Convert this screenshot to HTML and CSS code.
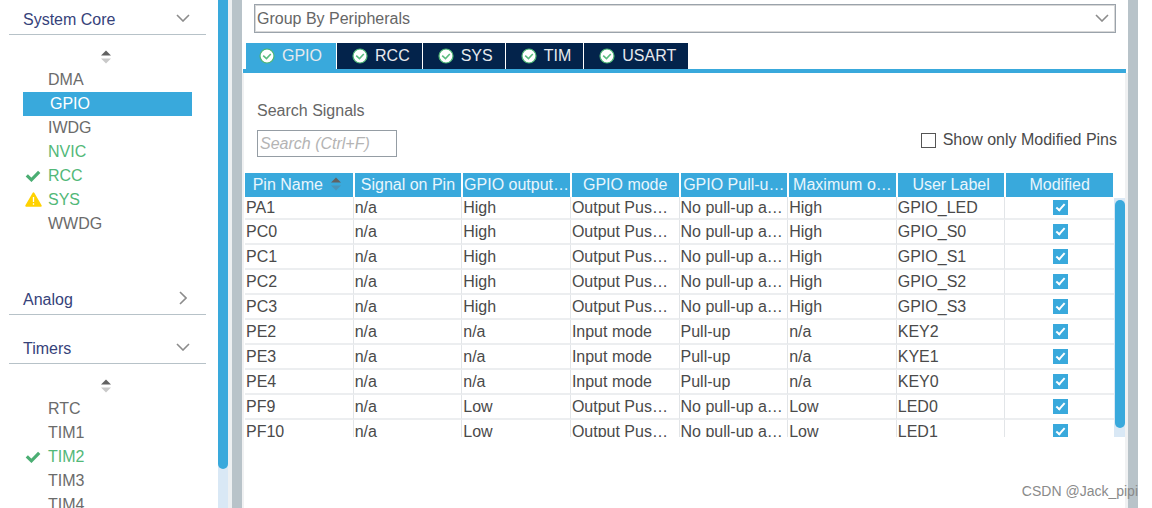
FILE: index.html
```html
<!DOCTYPE html>
<html lang="en">
<head>
<meta charset="utf-8">
<title>GPIO Mode and Configuration</title>
<link rel="stylesheet" href="styles.css">
</head>
<body>
<svg class="defs" width="0" height="0" aria-hidden="true">
  <symbol id="chev" viewBox="0 0 14 8"><path d="M1 1l6 6 6-6" fill="none" stroke="#8c8c8c" stroke-width="1.6"/></symbol>
  <symbol id="chev-right" viewBox="0 0 8 14"><path d="M1 1l6 6-6 6" fill="none" stroke="#8c8c8c" stroke-width="1.6"/></symbol>
  <symbol id="sort" viewBox="0 0 10 14"><path d="M5 0.5L10 5.5H0z" fill="#626262"/><path d="M0 8.5h10L5 13.5z" fill="#c9c9c9"/></symbol>
  <symbol id="check" viewBox="0 0 16 12"><path d="M1.8 5.4l4.6 4.4 7.8-8" fill="none" stroke="#4bae73" stroke-width="3.2"/></symbol>
  <symbol id="warn" viewBox="0 0 17 15"><path d="M8.5 1.2L15.8 13.8H1.2z" fill="#ffd200" stroke="#ffd200" stroke-width="1.8" stroke-linejoin="round"/><path d="M8.5 5v5M8.5 11.2v1.6" stroke="#fff" stroke-width="1.3"/></symbol>
  <symbol id="ok" viewBox="0 0 16 16"><circle cx="8" cy="8" r="7" fill="#fff" stroke="#4bb573" stroke-width="1.2"/><path d="M4.2 7.6l3.3 3 4.3-4.6" fill="none" stroke="#5bbd80" stroke-width="1.6"/></symbol>
</svg>
<div class="app">
  <nav class="sidebar">
    <section class="group group-open">
      <button class="group-head">System Core <svg class="chev"><use href="#chev"/></svg></button>
      <svg class="sort"><use href="#sort"/></svg>
      <ul class="items">
        <li><button class="item"><span class="mark"></span>DMA</button></li>
        <li><button class="item selected"><span class="mark"></span>GPIO</button></li>
        <li><button class="item"><span class="mark"></span>IWDG</button></li>
        <li><button class="item active"><span class="mark"></span>NVIC</button></li>
        <li><button class="item active"><span class="mark"><svg class="check"><use href="#check"/></svg></span>RCC</button></li>
        <li><button class="item active"><span class="mark"><svg class="warn"><use href="#warn"/></svg></span>SYS</button></li>
        <li><button class="item"><span class="mark"></span>WWDG</button></li>
      </ul>
    </section>
    <section class="group">
      <button class="group-head">Analog <svg class="chev-right"><use href="#chev-right"/></svg></button>
    </section>
    <section class="group">
      <button class="group-head">Timers <svg class="chev"><use href="#chev"/></svg></button>
      <svg class="sort"><use href="#sort"/></svg>
      <ul class="items">
        <li><button class="item"><span class="mark"></span>RTC</button></li>
        <li><button class="item"><span class="mark"></span>TIM1</button></li>
        <li><button class="item active"><span class="mark"><svg class="check"><use href="#check"/></svg></span>TIM2</button></li>
        <li><button class="item"><span class="mark"></span>TIM3</button></li>
        <li><button class="item"><span class="mark"></span>TIM4</button></li>
      </ul>
    </section>
  </nav>
  <div class="side-track"><div class="side-thumb"></div></div>
  <div class="divider"></div>
  <main class="main">
    <div class="combo">
      <select aria-label="Grouping"><option>Group By Peripherals</option></select>
      <svg class="chev"><use href="#chev"/></svg>
    </div>
    <div class="tabs" role="tablist">
      <button class="tab current" role="tab" aria-selected="true"><svg class="ok"><use href="#ok"/></svg>GPIO</button>
      <button class="tab" role="tab"><svg class="ok"><use href="#ok"/></svg>RCC</button>
      <button class="tab" role="tab"><svg class="ok"><use href="#ok"/></svg>SYS</button>
      <button class="tab" role="tab"><svg class="ok"><use href="#ok"/></svg>TIM</button>
      <button class="tab" role="tab"><svg class="ok"><use href="#ok"/></svg>USART</button>
    </div>
    <div class="panel">
      <div class="filters">
        <div class="search">
          <label for="search">Search Signals</label>
          <input id="search" type="text" placeholder="Search (Ctrl+F)">
        </div>
        <label class="only"><input type="checkbox" class="box">Show only Modified Pins</label>
      </div>
      <div class="grid">
        <table class="pins">
          <thead>
            <tr><th><span class="name">Pin Name <svg class="sort-th" viewBox="0 0 10 14"><path d="M5 0.5L10 5.5H0z" fill="#626262"/><path d="M0 8.5h10L5 13.5z" fill="#4a93b8"/></svg></span></th><th>Signal on Pin</th><th>GPIO output…</th><th>GPIO mode</th><th>GPIO Pull-u…</th><th>Maximum o…</th><th>User Label</th><th>Modified</th></tr>
          </thead>
          <tbody>
            <tr><td>PA1</td><td>n/a</td><td>High</td><td>Output Pus…</td><td>No pull-up a…</td><td>High</td><td>GPIO_LED</td><td><input type="checkbox" class="tick" aria-label="PA1 modified" checked></td></tr>
            <tr><td>PC0</td><td>n/a</td><td>High</td><td>Output Pus…</td><td>No pull-up a…</td><td>High</td><td>GPIO_S0</td><td><input type="checkbox" class="tick" aria-label="PC0 modified" checked></td></tr>
            <tr><td>PC1</td><td>n/a</td><td>High</td><td>Output Pus…</td><td>No pull-up a…</td><td>High</td><td>GPIO_S1</td><td><input type="checkbox" class="tick" aria-label="PC1 modified" checked></td></tr>
            <tr><td>PC2</td><td>n/a</td><td>High</td><td>Output Pus…</td><td>No pull-up a…</td><td>High</td><td>GPIO_S2</td><td><input type="checkbox" class="tick" aria-label="PC2 modified" checked></td></tr>
            <tr><td>PC3</td><td>n/a</td><td>High</td><td>Output Pus…</td><td>No pull-up a…</td><td>High</td><td>GPIO_S3</td><td><input type="checkbox" class="tick" aria-label="PC3 modified" checked></td></tr>
            <tr><td>PE2</td><td>n/a</td><td>n/a</td><td>Input mode</td><td>Pull-up</td><td>n/a</td><td>KEY2</td><td><input type="checkbox" class="tick" aria-label="PE2 modified" checked></td></tr>
            <tr><td>PE3</td><td>n/a</td><td>n/a</td><td>Input mode</td><td>Pull-up</td><td>n/a</td><td>KYE1</td><td><input type="checkbox" class="tick" aria-label="PE3 modified" checked></td></tr>
            <tr><td>PE4</td><td>n/a</td><td>n/a</td><td>Input mode</td><td>Pull-up</td><td>n/a</td><td>KEY0</td><td><input type="checkbox" class="tick" aria-label="PE4 modified" checked></td></tr>
            <tr><td>PF9</td><td>n/a</td><td>Low</td><td>Output Pus…</td><td>No pull-up a…</td><td>Low</td><td>LED0</td><td><input type="checkbox" class="tick" aria-label="PF9 modified" checked></td></tr>
            <tr><td>PF10</td><td>n/a</td><td>Low</td><td>Output Pus…</td><td>No pull-up a…</td><td>Low</td><td>LED1</td><td><input type="checkbox" class="tick" aria-label="PF10 modified" checked></td></tr>
          </tbody>
        </table>
        <div class="grid-track"><div class="grid-thumb"></div></div>
      </div>
    </div>
  </main>
  <div class="divider"></div>
  <div class="margin"></div>
  <div class="watermark">CSDN @Jack_pipi</div>
</div>
</body>
</html>
```
FILE: styles.css
```css
*, *::after { box-sizing: border-box; }
body {
  margin: 0;
  background: #fff;
  color: #4a4a4a;
  font: 16px/20px "Liberation Sans", Arial, sans-serif;
}
button, input, select { font: inherit; color: inherit; margin: 0; }
button { border: 0; background: none; padding: 0; }
svg { display: block; flex: none; }
.defs { position: absolute; }
.app { position: relative; display: flex; height: 100vh; overflow: hidden; }

/* category tree */
.sidebar { flex: 0 0 218px; padding: 0 12px 0 9px; }
.group { margin-bottom: 14px; }
.group-open { margin-bottom: 44px; }
.group-head {
  display: flex;
  align-items: center;
  justify-content: space-between;
  width: 100%;
  height: 35px;
  padding: 5px 16px 0 14px;
  border-bottom: 1px solid #b7c2c8;
  color: #36427a;
}
.chev { width: 14px; height: 8px; margin-bottom: 4px; }
.chev-right { width: 8px; height: 14px; margin: 0 3px 4px 0; }
.sort { width: 10px; height: 14px; margin: 15px auto 4px 92px; }
.items { list-style: none; margin: 0 14px; padding: 0; }
.item {
  display: flex;
  align-items: center;
  width: 100%;
  height: 24px;
  padding-bottom: 1px;
  color: #6b6b6b;
}
.item.active { color: #52b878; }
.item.selected { background: #39a9dc; color: #fff; padding-left: 2px; }
.mark { width: 25px; padding-left: 2px; }
.check { width: 16px; height: 12px; }
.warn { width: 17px; height: 15px; }
.side-track { flex: 0 0 10px; background: #d9e8f5; }
.side-thumb { height: 469px; background: #39a9dc; border-radius: 0 0 5px 5px; }
.divider {
  flex: 0 0 10px;
  background: #b8c3c9;
}
.side-track + .divider { flex-basis: 14px; border-left: 4px solid #edf0f2; }
.margin { flex: 0 0 14px; }

/* configuration pane */
.main { flex: 1; min-width: 0; display: flex; flex-direction: column; }
.combo {
  display: grid;
  align-items: center;
  margin: 4px 12px 10px;
  border: 1px solid #9ba3ab;
}
.combo > * { grid-area: 1 / 1; }
.combo select {
  appearance: none;
  width: 100%;
  height: 27px;
  padding: 0 1px;
  border: 1px solid #d8d8d8;
  border-radius: 0;
  background: #fff;
  color: #666;
}
.combo .chev { justify-self: end; margin: 0 6px 2px 0; pointer-events: none; }
.tabs {
  display: flex;
  gap: 1px;
  margin: 0 2px 0 1px;
  padding-left: 3px;
  border-bottom: 4px solid #39a9dc;
}
.tab {
  display: flex;
  align-items: center;
  gap: 7px;
  height: 26px;
  padding: 0 12px 0 15px;
  background: #03234b;
  color: #e6e9ed;
}
.tab.current { background: #39a9dc; padding: 0 14px 0 13px; }
.ok { width: 16px; height: 16px; }
.panel {
  flex: 1;
  padding: 28px 0 0 1px;
  border-left: 2px solid #f0f1f2;
  border-right: 3px solid #f0f1f2;
}
.filters {
  display: flex;
  justify-content: space-between;
  align-items: flex-end;
  padding: 0 8px 0 12px;
  margin-bottom: 16px;
}
.search { display: flex; flex-direction: column; gap: 9px; color: #666; }
.search input {
  width: 140px;
  height: 27px;
  padding: 0 2px;
  border: 1px solid #959da4;
  border-radius: 0;
  background: #fff;
}
.search input::placeholder { color: #b4b4b4; font-style: italic; opacity: 1; }
.only { display: flex; align-items: center; gap: 7px; margin-bottom: 7px; }
.box, .tick { appearance: none; display: block; width: 15px; height: 15px; }
.box { border: 1px solid #555; }

/* pin table */
.grid { display: grid; grid-template-columns: 1fr 11px; height: 264px; overflow: hidden; }
.pins { width: 100%; align-self: start; table-layout: fixed; border-collapse: separate; border-spacing: 0; }
th, td { padding: 0; white-space: nowrap; overflow: hidden; text-align: left; }
th {
  height: 24px;
  border-left: 1px solid #fff;
  border-right: 1px solid #fff;
  background: #39a9dc;
  color: #e9f6fc;
  font-weight: 400;
  text-align: center;
}
th:first-child { border-left: 0; }
td {
  height: 25px;
  padding-left: 1px;
  border-right: 1px solid #e2e5e8;
  border-bottom: 2px solid #eceef0;
}
tbody tr:first-child td { height: 23px; }
td:last-child { border-right: 0; }
.name { display: inline-flex; gap: 8px; margin-right: 4px; vertical-align: top; }
.sort-th { width: 10px; height: 14px; margin-top: 2px; }
.tick { position: relative; margin: 0 auto; background: #39a9dc; }
.tick::after {
  content: "";
  position: absolute;
  left: 5px;
  top: 2px;
  width: 5px;
  height: 9px;
  border: solid #fff;
  border-width: 0 2px 2px 0;
  transform: rotate(42deg);
}
.grid-track { margin-top: 25px; padding: 2px 0 0 1px; background: #d9e8f5; }
.grid-thumb { height: 228px; border-radius: 5px; background: #39a9dc; }
.watermark {
  position: absolute;
  right: 14px;
  bottom: 7px;
  color: #8a8a8a;
  font-size: 14px;
}
```
